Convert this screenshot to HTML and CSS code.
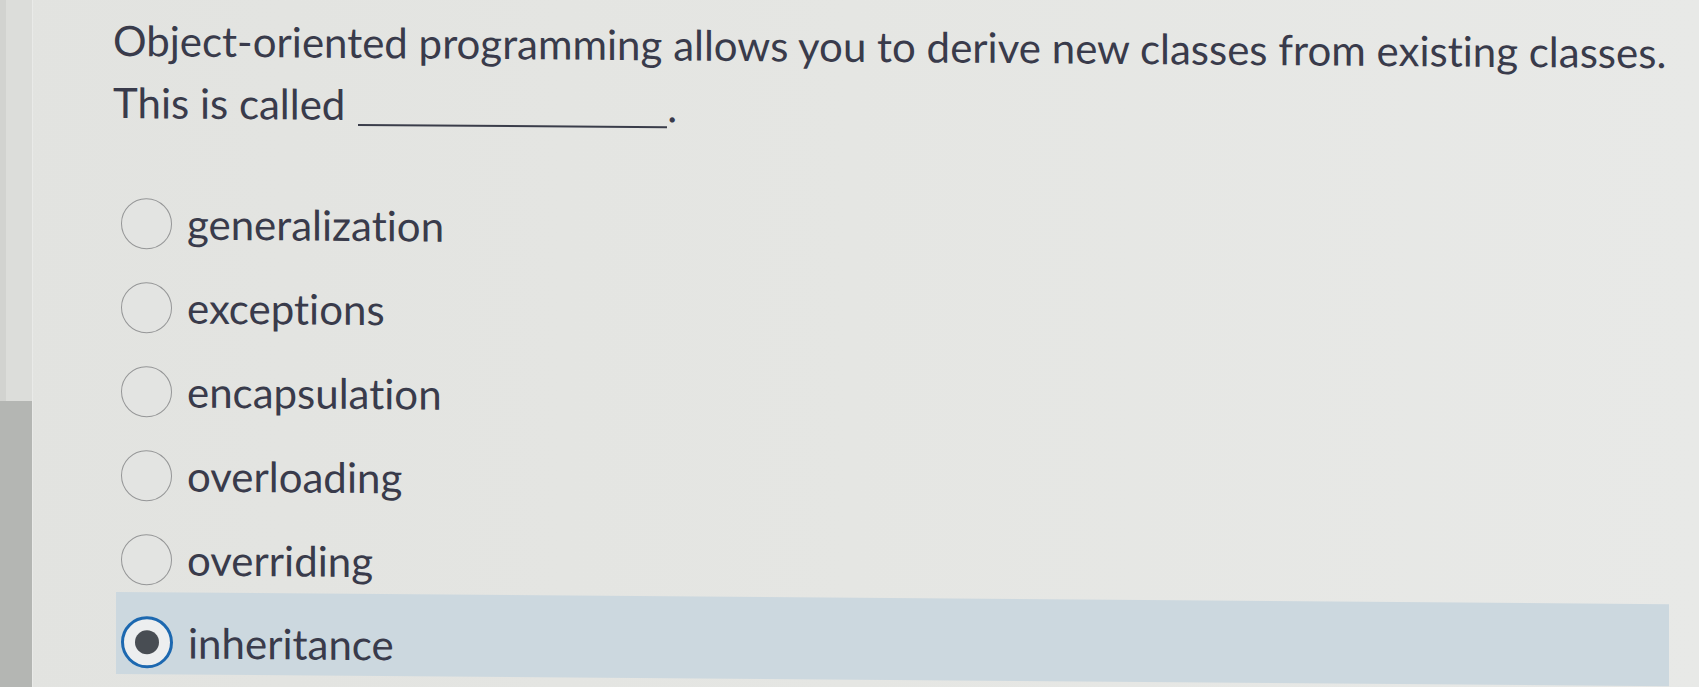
FILE: index.html
```html
<!DOCTYPE html>
<html lang="en">
<head>
<meta charset="utf-8">
<title>Quiz question</title>
<link rel="stylesheet" href="styles.css">
</head>
<body>
<div class="screen">
  <aside class="rail">
    <div class="rail-top"></div>
    <div class="rail-bottom"></div>
  </aside>
  <main class="content">
    <div class="sheet">
      <p class="question">Object-oriented programming allows you to derive new classes from existing classes.<br>This is called <span class="blank"></span>.</p>
      <ul class="answers">
        <li class="answer"><span class="radio"></span><span class="label">generalization</span></li>
        <li class="answer"><span class="radio"></span><span class="label">exceptions</span></li>
        <li class="answer"><span class="radio"></span><span class="label">encapsulation</span></li>
        <li class="answer"><span class="radio"></span><span class="label">overloading</span></li>
        <li class="answer"><span class="radio"></span><span class="label">overriding</span></li>
        <li class="answer selected"><span class="radio checked"></span><span class="label">inheritance</span></li>
      </ul>
    </div>
  </main>
</div>
</body>
</html>
```
FILE: styles.css
```css
html, body {
  margin: 0;
  padding: 0;
  height: 100%;
}
body {
  background: #e4e5e2;
  font-family: Lato, "Noto Sans", "Liberation Sans", sans-serif;
  font-variant-ligatures: none;
  color: #393b4b;
  overflow: hidden;
}
.screen {
  display: flex;
  height: 687px;
  overflow: hidden;
  background: linear-gradient(90deg, #e2e3e0 0%, #e5e6e3 50%, #e8e9e7 100%);
}
.rail {
  width: 32px;
  flex: none;
  display: flex;
  flex-direction: column;
  border-right: 1px solid #e9eae8;
}
.rail-top {
  height: 401px;
  background: linear-gradient(90deg, #d2d3d0 0, #d2d3d0 6px, #dcdddA 6px);
}
.rail-bottom {
  flex: 1;
  background: #b4b6b3;
}
.content {
  flex: 1;
  padding: 0 30px 0 80px;
}
.sheet {
  transform: skewY(0.45deg);
  transform-origin: 0 0;
}
.question {
  margin: 0;
  padding-top: 9px;
  font-size: 42px;
  line-height: 62px;
  white-space: nowrap;
}
.blank {
  display: inline-block;
  width: 309px;
  height: 0;
  margin-left: 2px;
  border-bottom: 2px solid #3a3d4a;
  vertical-align: -6px;
}
.answers {
  list-style: none;
  margin: 0;
  padding: 0 0 0 3px;
  margin-top: 48px;
}
.answer {
  display: flex;
  align-items: center;
  gap: 15px;
  height: 84px;
  padding-left: 5px;
}
.radio {
  width: 49px;
  height: 49px;
  flex: none;
  border: 1.5px solid #959697;
  border-radius: 50%;
  background: #e3e4e2;
  display: flex;
  align-items: center;
  justify-content: center;
}
.label {
  font-size: 42px;
  line-height: 1;
}
.answer.selected {
  height: 82px;
  margin-top: -9px;
  padding-top: 18px;
  box-sizing: border-box;
  background: #ccd8df;
}
.radio.checked {
  width: 46px;
  height: 46px;
  border: 3px solid #1c68b0;
  background: #eceeef;
}
.radio.checked::after {
  content: "";
  width: 24px;
  height: 24px;
  border-radius: 50%;
  background: #484d53;
}
```
